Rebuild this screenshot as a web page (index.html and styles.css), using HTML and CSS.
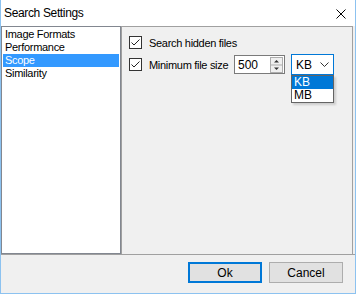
FILE: index.html
```html
<!DOCTYPE html>
<html lang="en">
  <head>
    <meta charset="UTF-8" />
    <title>Search Settings</title>
    <link rel="stylesheet" href="styles.css">
  </head>
  <body>
    <div class="window">
      <div class="titlebar">
        <span class="title">Search Settings</span>
        <svg class="close" width="10" height="10" viewBox="0 0 10 10">
          <path d="M0.5 0.5 L9.5 9.5 M9.5 0.5 L0.5 9.5" stroke="#000" stroke-width="1" fill="none" />
        </svg>
      </div>

      <div class="body">
        <ul class="list">
          <li>Image Formats</li>
          <li>Performance</li>
          <li class="selected">Scope</li>
          <li>Similarity</li>
        </ul>

        <div class="panel">
          <div class="row">
            <span class="check">
              <svg width="11" height="11" viewBox="0 0 11 11">
                <path d="M1.5 5.5 L4 8 L9.5 2.5" stroke="#222" stroke-width="1" fill="none" />
              </svg>
            </span>
            <span class="label">Search hidden files</span>
          </div>
          <div class="row tall">
            <span class="check">
              <svg width="11" height="11" viewBox="0 0 11 11">
                <path d="M1.5 5.5 L4 8 L9.5 2.5" stroke="#222" stroke-width="1" fill="none" />
              </svg>
            </span>
            <span class="label wide">Minimum file size</span>
            <div class="numeric">
              <span class="value">500</span>
              <span class="spin">
                <svg width="13" height="16" viewBox="0 0 13 16">
                  <rect x="0.5" y="0.5" width="12" height="15" fill="#f0f0f0" stroke="#adadad" />
                  <line x1="0.5" y1="8" x2="12.5" y2="8" stroke="#adadad" />
                  <path d="M4 5.5 L6.5 3 L9 5.5 Z" fill="#333" />
                  <path d="M4 10.5 L6.5 13 L9 10.5 Z" fill="#333" />
                </svg>
              </span>
            </div>
            <div class="combo">
              <span class="value">KB</span>
              <svg class="chevron" width="9" height="5" viewBox="0 0 9 5">
                <path d="M0.5 0.5 L4.5 4.5 L8.5 0.5" stroke="#333" stroke-width="1" fill="none" />
              </svg>
              <ul class="dropdown">
                <li class="selected">KB</li>
                <li>MB</li>
              </ul>
            </div>
          </div>
        </div>
      </div>

      <div class="footer">
        <button class="button default">Ok</button>
        <button class="button">Cancel</button>
      </div>
    </div>
  </body>
</html>
```

FILE: styles.css
```css
body {
  margin: 0;
  font-family: "Liberation Sans", Arial, sans-serif;
  font-size: 11px;
  letter-spacing: -0.3px;
  color: #000;
}

.window {
  width: 356px;
  height: 294px;
  box-sizing: border-box;
  border: 1px solid #8cc2f0;
  border-top: none;
  background-color: #f0f0f0;
  display: flex;
  flex-direction: column;
}

.titlebar {
  height: 26px;
  flex-shrink: 0;
  background-color: #fff;
  display: flex;
  align-items: center;
  justify-content: space-between;
  padding: 0 9px 0 3px;
}
.title {
  font-size: 12px;
  letter-spacing: -0.35px;
  margin-top: -1px;
}
.close {
  margin-top: 1px;
}

.body {
  display: flex;
  height: 228px;
  padding-right: 2px;
}

.list {
  list-style: none;
  margin: 0;
  width: 120px;
  box-sizing: border-box;
  padding: 1px 1px 0 1px;
  background-color: #fff;
  border: 1px solid #828790;
}
.list li {
  height: 13px;
  line-height: 13px;
  padding-left: 2px;
}
.list li.selected {
  background-color: #3399ff;
  color: #fff;
}

.panel {
  flex: 1;
  border: 1px solid #a0a0a0;
  border-bottom: none;
  padding: 8px 0 0 7px;
  display: flex;
  flex-direction: column;
  gap: 5px;
}

.row {
  display: flex;
  align-items: center;
  height: 13px;
  margin-top: 1px;
}
.row.tall {
  height: 21px;
  margin-top: 0;
}

.check {
  width: 13px;
  height: 13px;
  box-sizing: border-box;
  border: 1px solid #333;
  background-color: #fff;
  display: flex;
}
.label {
  margin-left: 7px;
}
.label.wide {
  width: 85px;
}

.numeric {
  width: 51px;
  height: 19px;
  box-sizing: border-box;
  border: 1px solid #7a7a7a;
  background-color: #fff;
  display: flex;
  align-items: center;
  justify-content: space-between;
  padding: 0 1px 0 3px;
  font-size: 12px;
  letter-spacing: 0;
}
.spin {
  display: flex;
}

.combo {
  position: relative;
  width: 43px;
  height: 21px;
  margin-left: 6px;
  box-sizing: border-box;
  border: 1px solid #0078d7;
  background-color: #fff;
  display: flex;
  align-items: center;
  justify-content: space-between;
  padding: 0 4px;
  font-size: 12px;
  letter-spacing: 0;
}

.dropdown {
  position: absolute;
  left: -1px;
  top: 20px;
  width: 43px;
  box-sizing: border-box;
  list-style: none;
  margin: 0;
  padding: 0;
  background-color: #fff;
  border: 1px solid #646464;
  box-shadow: 2px 2px 2px rgba(0, 0, 0, 0.15);
}
.dropdown li {
  height: 13px;
  line-height: 13px;
  padding-left: 2px;
}
.dropdown li.selected {
  background-color: #0078d7;
  color: #fff;
}

.footer {
  flex: 1;
  border-top: 1px solid #a0a0a0;
  display: flex;
  justify-content: flex-end;
  align-items: flex-start;
  gap: 7px;
  padding: 7px 12px 0 0;
}

.button {
  width: 74px;
  height: 21px;
  box-sizing: border-box;
  background-color: #e1e1e1;
  border: 1px solid #adadad;
  font-family: "Liberation Sans", Arial, sans-serif;
  font-size: 12px;
  color: #000;
  padding: 0;
}
.button.default {
  border: 2px solid #0078d7;
}
```
